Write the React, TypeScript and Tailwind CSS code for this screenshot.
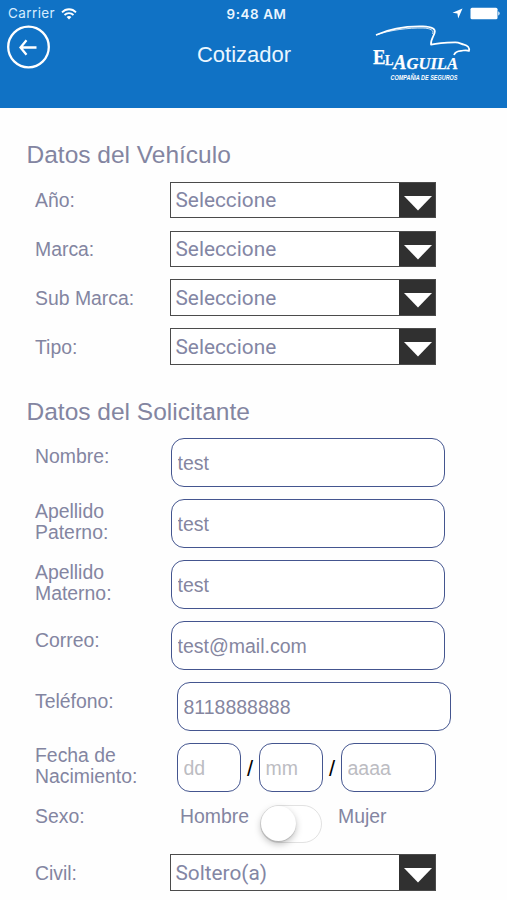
import React from "react";

interface SelectBoxProps {
    value: string;
}

interface FieldRowProps {
    label: string;
    value: string;
    shifted?: boolean;
}

const vehicleFields = ["Año:", "Marca:", "Sub Marca:", "Tipo:"];

const applicantFields: FieldRowProps[] = [
    { label: "Nombre:", value: "test" },
    { label: "Apellido Paterno:", value: "test" },
    { label: "Apellido Materno:", value: "test" },
    { label: "Correo:", value: "test@mail.com" },
    { label: "Teléfono:", value: "8118888888", shifted: true },
];

const inputClass =
    "h-[49px] min-w-0 rounded-[13px] border-[1.5px] border-[#44558f] bg-white pl-[5.5px] pt-[2px] text-[19.5px] text-[#85869f] outline-none placeholder:text-[#bcbcc2]";

function Logo() {
    return (
        <svg width="104" height="64" viewBox="370 22 104 64" fill="none">
            <path
                d="M376 35 C389 29 407 26 423 26.4 C432 26.8 436 29 434.6 33 C433.5 36.5 430.5 40 431 44.6 C438 43 447 42.6 455 42.4 C459.5 42.2 461 44.2 464 44.6 C467.5 45.2 469.8 47.8 469 51 C466.5 49.6 464 50.6 461 50.8 C457.5 51 455 52 454 55"
                stroke="white"
                strokeWidth="1.7"
                strokeLinejoin="round"
            />
            <path d="M376 35 C390 30 408 27.8 423 28 C431 28.3 434 30.5 432.6 34" stroke="white" strokeWidth="0.8" />
            <g fill="white" stroke="white" strokeWidth="0.25" fontFamily="Liberation Serif, serif" fontWeight="bold">
                <text x="373" y="64.3" fontSize="20" textLength="12.5" lengthAdjust="spacingAndGlyphs">E</text>
                <text x="385" y="65.2" fontSize="14.5" textLength="8.5" lengthAdjust="spacingAndGlyphs">L</text>
                <text x="393.5" y="69" fontSize="20" fontStyle="italic" textLength="13" lengthAdjust="spacingAndGlyphs">A</text>
                <text x="406.5" y="69" fontSize="17" fontStyle="italic" textLength="51.5" lengthAdjust="spacingAndGlyphs">GUILA</text>
            </g>
            <text
                x="390.5"
                y="79.8"
                fill="white"
                fontFamily="Liberation Sans Narrow, Liberation Sans, sans-serif"
                fontWeight="bold"
                fontStyle="italic"
                fontSize="6.8"
                textLength="67"
                lengthAdjust="spacingAndGlyphs"
            >
                COMPAÑIA DE SEGUROS
            </text>
        </svg>
    );
}

function StatusBar() {
    return (
        <div className="grid h-[27px] grid-cols-3 items-center pl-[8px] pr-[6px] font-['Inter','Liberation_Sans',sans-serif] text-[13px] leading-none">
            <div className="flex items-center gap-[5px]">
                <span className="w-[48px] whitespace-nowrap pt-px text-[13.5px] tracking-[0.4px] text-[#d5ecff]">Carrier</span>
                <svg width="16" height="12" viewBox="0 0 16 12" fill="none" stroke="white" strokeWidth="1.8">
                    <path d="M1 4.3 C5 .2 11 .2 15 4.3" />
                    <path d="M3.5 7 C6 4.5 10 4.5 12.5 7" />
                    <path d="M8 11.5 L5.6 9 C7 7.7 9 7.7 10.4 9 Z" fill="white" stroke="none" />
                </svg>
            </div>
            <span className="pl-[4px] pt-[2px] text-center text-[13.4px] font-semibold tracking-[0.6px] text-[#eaf6ff]">9:48 AM</span>
            <div className="flex items-center justify-end gap-[7px]">
                <svg width="11" height="11" viewBox="0 0 11 11">
                    <path d="M10.5 .5 L6.2 10.5 L5.4 5.6 L.5 4.8 Z" fill="white" />
                </svg>
                <svg width="31" height="13" viewBox="0 0 31 13" fill="white">
                    <rect x="0.5" y="0.8" width="27" height="11.4" rx="1.5" />
                    <path d="M28.3 4.3 Q31 6.5 28.3 8.7 Z" />
                </svg>
            </div>
        </div>
    );
}

function Header() {
    return (
        <header className="h-[108px] bg-[#1072c5] text-white">
            <StatusBar />
            <div className="grid grid-cols-[160px_168px_1fr] items-start">
                <button type="button" className="-mt-[2px] ml-[7px] w-[43px]">
                    <svg width="43" height="44" viewBox="0 -0.5 43 44" fill="none" stroke="white">
                        <circle cx="21.5" cy="21.5" r="20.3" strokeWidth="2.3" />
                        <path d="M29.5 22 H14 M19.5 14.8 L13.5 22 L19.5 29.2" strokeWidth="2.3" />
                    </svg>
                </button>
                <h1 className="pt-[15px] text-center text-[22px] leading-[26px] text-[#eaf6ff]">Cotizador</h1>
                <div className="-mt-[5px] pl-[42px]">
                    <Logo />
                </div>
            </div>
        </header>
    );
}

function SelectBox({ value }: SelectBoxProps) {
    return (
        <button
            type="button"
            className="flex h-[36.5px] w-[266px] items-stretch border-[1.5px] border-[#4b4b4b] bg-white text-left"
        >
            <span className="flex flex-1 items-center pl-[4.5px] pt-[2px] font-['Roboto','Inter',sans-serif] text-[20.8px] text-[#8386a4]">
                {value}
            </span>
            <span className="flex w-[36px] justify-end bg-[#303030] pr-[3px] pt-[13px]">
                <svg width="28" height="15" viewBox="0 0 28 15">
                    <path d="M0 0 H28 L14 14.5 Z" fill="white" />
                </svg>
            </span>
        </button>
    );
}

function FieldRow({ label, value, shifted }: FieldRowProps) {
    const twoLines = label.includes(" ");
    return (
        <div className="flex h-[49px]">
            <label className={`w-[136px] pr-[20px] leading-[21.5px] ${twoLines ? "pt-[1.5px]" : "pt-[8.5px]"}`}>{label}</label>
            <input defaultValue={value} className={`${inputClass} w-[274px] ${shifted ? "ml-[6px]" : ""}`} />
        </div>
    );
}

export default function App() {
    return (
        <div className="h-[900px] w-[507px] overflow-hidden bg-[#fefefe] font-['Liberation_Sans',Arial,sans-serif] text-[19.4px] text-[#8385a1]">
            <Header />

            <main className="pl-[35px]">
                <h2 className="-ml-[8.5px] pt-[32px] text-[24.5px] leading-[30px]">Datos del Vehículo</h2>
                <div className="flex flex-col gap-[12px] pt-[11.7px]">
                    {vehicleFields.map((label) => (
                        <div key={label} className="flex h-[36.9px]">
                            <span className="w-[135px] pt-[7.5px] leading-[22px]">{label}</span>
                            <SelectBox value="Seleccione" />
                        </div>
                    ))}
                </div>

                <h2 className="-ml-[8.5px] pt-[31.4px] text-[24.5px] leading-[30px]">Datos del Solicitante</h2>
                <div className="flex flex-col gap-[12.1px] pt-[11.3px]">
                    {applicantFields.map((field) => (
                        <FieldRow key={field.label} {...field} />
                    ))}
                    <div className="flex h-[49px]">
                        <label className="w-[142px] pr-[20px] pt-[1.5px] leading-[21.5px]">Fecha de Nacimiento:</label>
                        <div className="flex items-center text-[22px] text-black">
                            <input placeholder="dd" className={`${inputClass} w-[64px]`} />
                            <span className="w-[18px] pt-[2px] text-center">/</span>
                            <input placeholder="mm" className={`${inputClass} w-[64px]`} />
                            <span className="w-[18px] pt-[2px] text-center">/</span>
                            <input placeholder="aaaa" className={`${inputClass} w-[95px]`} />
                        </div>
                    </div>
                </div>

                <div className="flex h-[62px] items-start pt-[12.5px]">
                    <span className="w-[145px] leading-[22px]">Sexo:</span>
                    <span className="w-[80px] leading-[22px]">Hombre</span>
                    <button
                        type="button"
                        role="switch"
                        aria-checked={false}
                        className="h-[38px] w-[62px] rounded-full border-[1.5px] border-[#e2e2e2] bg-white"
                    >
                        <span className="block size-[35px] rounded-full bg-white shadow-[0_3px_7px_rgba(0,0,0,0.25),0_1px_1px_rgba(0,0,0,0.15)]" />
                    </button>
                    <span className="pl-[16px] leading-[22px]">Mujer</span>
                </div>

                <div className="flex h-[37px]">
                    <span className="w-[135px] pt-[7.5px] leading-[22px]">Civil:</span>
                    <SelectBox value="Soltero(a)" />
                </div>
            </main>
        </div>
    );
}
